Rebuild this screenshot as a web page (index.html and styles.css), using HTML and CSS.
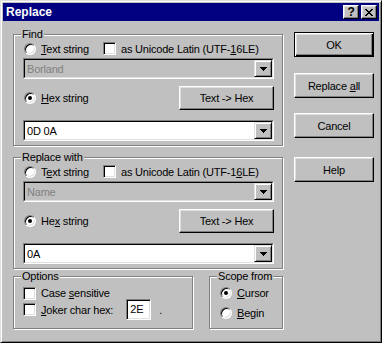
FILE: index.html
```html
<!DOCTYPE html>
<html lang="en">
<head>
  <meta charset="UTF-8" />
  <title>Replace</title>
  <link rel="stylesheet" href="styles.css">
</head>
<body>
  <div class="window">
    <div class="titlebar">
      <span class="title">Replace</span>
      <div class="caption-btns">
        <span class="cap-btn help">?</span>
        <span class="cap-btn close">
          <svg width="8" height="7" viewBox="0 0 8 7" shape-rendering="crispEdges">
            <path d="M0 0h2v1H0zM6 0h2v1H6zM1 1h2v1H1zM5 1h2v1H5zM2 2h4v1H2zM3 3h2v1H3zM2 4h4v1H2zM1 5h2v1H1zM5 5h2v1H5zM0 6h2v1H0zM6 6h2v1H6z" fill="#000"/>
          </svg>
        </span>
      </div>
    </div>

    <div class="client">
      <div class="left-col">
        <!-- Find -->
        <fieldset class="group main-group">
          <legend>Find</legend>
          <div class="opt-row">
            <label class="radio-label"><span class="radio"></span><span><u>T</u>ext string</span></label>
            <label class="check-label"><span class="check"></span><span>as Unicode Latin (UTF-<u>1</u>6LE)</span></label>
          </div>
          <div class="combo disabled first-combo">
            <div class="combo-inner">
              <span class="combo-text">Borland</span>
              <span class="combo-btn"><svg width="7" height="4" viewBox="0 0 7 4" shape-rendering="crispEdges"><path d="M0 0h7v1H0zM1 1h5v1H1zM2 2h3v1H2zM3 3h1v1H3z" fill="#000"/></svg></span>
            </div>
          </div>
          <div class="hex-row">
            <label class="radio-label"><span class="radio checked"></span><span><u>H</u>ex string</span></label>
            <button class="btn text-hex">Text -&gt; Hex</button>
          </div>
          <div class="combo last-combo">
            <div class="combo-inner">
              <span class="combo-text">0D 0A</span>
              <span class="combo-btn"><svg width="7" height="4" viewBox="0 0 7 4" shape-rendering="crispEdges"><path d="M0 0h7v1H0zM1 1h5v1H1zM2 2h3v1H2zM3 3h1v1H3z" fill="#000"/></svg></span>
            </div>
          </div>
        </fieldset>

        <!-- Replace with -->
        <fieldset class="group main-group replace-group">
          <legend>Replace with</legend>
          <div class="opt-row">
            <label class="radio-label"><span class="radio"></span><span>T<u>e</u>xt string</span></label>
            <label class="check-label"><span class="check"></span><span>as Unicode Latin (UTF-1<u>6</u>LE)</span></label>
          </div>
          <div class="combo disabled first-combo">
            <div class="combo-inner">
              <span class="combo-text">Name</span>
              <span class="combo-btn"><svg width="7" height="4" viewBox="0 0 7 4" shape-rendering="crispEdges"><path d="M0 0h7v1H0zM1 1h5v1H1zM2 2h3v1H2zM3 3h1v1H3z" fill="#000"/></svg></span>
            </div>
          </div>
          <div class="hex-row">
            <label class="radio-label"><span class="radio checked"></span><span>He<u>x</u> string</span></label>
            <button class="btn text-hex">Text -&gt; Hex</button>
          </div>
          <div class="combo last-combo">
            <div class="combo-inner">
              <span class="combo-text">0A</span>
              <span class="combo-btn"><svg width="7" height="4" viewBox="0 0 7 4" shape-rendering="crispEdges"><path d="M0 0h7v1H0zM1 1h5v1H1zM2 2h3v1H2zM3 3h1v1H3z" fill="#000"/></svg></span>
            </div>
          </div>
        </fieldset>

        <div class="bottom-row">
          <fieldset class="group options">
            <legend>Options</legend>
            <label class="check-label case-row"><span class="check"></span><span>Case <u>s</u>ensitive</span></label>
            <div class="joker-row">
              <label class="check-label"><span class="check"></span><span><u>J</u>oker char hex:</span></label>
              <span class="textbox">2E</span>
              <span class="dot">.</span>
            </div>
          </fieldset>
          <fieldset class="group scope">
            <legend>Scope from</legend>
            <label class="radio-label scope-row"><span class="radio checked"></span><span><u>C</u>ursor</span></label>
            <label class="radio-label scope-row"><span class="radio"></span><span><u>B</u>egin</span></label>
          </fieldset>
        </div>
      </div>

      <div class="button-col">
        <button class="btn side-btn default">OK</button>
        <button class="btn side-btn replace-all">Replace <u>a</u>ll</button>
        <button class="btn side-btn cancel">Cancel</button>
        <button class="btn side-btn help-btn">Help</button>
      </div>
    </div>
  </div>
</body>
</html>
```

FILE: styles.css
```css
:root {
  --face: #c0c0c0;
  --light: #dfdfdf;
  --shadow: #808080;
  --dark: #000000;
  --white: #ffffff;
  --title-blue: #000080;
}

body {
  margin: 0;
  font-family: 'Liberation Sans', Arial, sans-serif;
  font-size: 11px;
  letter-spacing: -0.2px;
  color: #000;
  background: var(--face);
}

.window {
  width: 382px;
  height: 343px;
  box-sizing: border-box;
  background: var(--face);
  border: 1px solid;
  border-color: var(--light) var(--dark) var(--dark) var(--light);
  box-shadow: inset 1px 1px var(--white), inset -1px -1px var(--shadow);
  padding: 2px;
  display: flex;
  flex-direction: column;
}

.titlebar {
  height: 18px;
  flex: none;
  background: var(--title-blue);
  color: #fff;
  display: flex;
  align-items: center;
  justify-content: space-between;
  padding: 0 2px 0 3px;
}

.title {
  font-weight: bold;
  font-size: 12px;
  letter-spacing: 0;
}

.caption-btns {
  display: flex;
  gap: 2px;
}

.cap-btn {
  width: 16px;
  height: 14px;
  box-sizing: border-box;
  background: var(--face);
  border: 1px solid;
  border-color: var(--white) var(--dark) var(--dark) var(--white);
  box-shadow: inset -1px -1px var(--shadow), inset 1px 1px var(--light);
  display: flex;
  align-items: center;
  justify-content: center;
  color: #000;
}

.cap-btn.help {
  font-weight: bold;
  font-size: 12px;
  line-height: 12px;
}

.client {
  flex: 1;
  display: flex;
  gap: 11px;
  padding: 7px 5px 0 10px;
}

.left-col {
  width: 270px;
  display: flex;
  flex-direction: column;
}

/* etched group boxes */
.group {
  margin: 0;
  min-width: 0;
  box-sizing: border-box;
  border: 1px solid var(--shadow);
  box-shadow: 1px 1px 0 var(--white), inset 1px 1px 0 var(--white);
  padding: 1px 8px 4px 9px;
}

.group legend {
  padding: 0 1px;
  margin-left: -2px;
  line-height: 13px;
  white-space: nowrap;
  background: var(--face);
}

.replace-group {
  margin-top: 5px;
}

.opt-row {
  display: flex;
  align-items: center;
  height: 13px;
}

.radio-label,
.check-label {
  display: flex;
  align-items: center;
  white-space: nowrap;
}

.opt-row .radio-label {
  width: 80px;
}

.radio {
  width: 12px;
  height: 12px;
  box-sizing: border-box;
  border-radius: 50%;
  border: 1px solid;
  border-color: var(--shadow) var(--white) var(--white) var(--shadow);
  box-shadow: inset 1px 1px var(--dark), inset -1px -1px var(--light);
  background: var(--white);
  margin: 0 5px 0 1px;
  position: relative;
  flex: none;
}

.radio.checked::after {
  content: '';
  position: absolute;
  left: 3px;
  top: 3px;
  width: 4px;
  height: 4px;
  border-radius: 50%;
  background: #000;
}

.check {
  width: 13px;
  height: 13px;
  box-sizing: border-box;
  border: 1px solid;
  border-color: var(--shadow) var(--white) var(--white) var(--shadow);
  box-shadow: inset 1px 1px var(--dark), inset -1px -1px var(--light);
  background: var(--white);
  margin-right: 5px;
  flex: none;
}

/* combo boxes */
.combo {
  height: 21px;
  box-sizing: border-box;
  border: 1px solid;
  border-color: var(--shadow) var(--white) var(--white) var(--shadow);
}

.combo-inner {
  height: 100%;
  box-sizing: border-box;
  border: 1px solid;
  border-color: var(--dark) var(--light) var(--light) var(--dark);
  background: var(--white);
  display: flex;
  align-items: center;
}

.combo.disabled .combo-inner {
  background: var(--face);
  color: var(--shadow);
}

.combo-text {
  flex: 1;
  padding-left: 2px;
}

.combo-btn {
  width: 18px;
  height: 17px;
  box-sizing: border-box;
  background: var(--face);
  border: 1px solid;
  border-color: var(--light) var(--dark) var(--dark) var(--light);
  box-shadow: inset 1px 1px var(--white), inset -1px -1px var(--shadow);
  display: flex;
  align-items: center;
  justify-content: center;
}

.first-combo {
  margin-top: 3px;
}

.hex-row {
  display: flex;
  align-items: center;
  justify-content: space-between;
  height: 24px;
  margin-top: 7px;
}

.last-combo {
  margin-top: 10px;
}

/* push buttons */
.btn {
  box-sizing: border-box;
  height: 24px;
  padding: 0;
  font: inherit;
  letter-spacing: inherit;
  color: #000;
  background: var(--face);
  border: 1px solid;
  border-color: var(--white) var(--dark) var(--dark) var(--white);
  box-shadow: inset -1px -1px var(--shadow), inset 1px 1px var(--light);
}

.text-hex {
  width: 95px;
}

.button-col {
  width: 80px;
  display: flex;
  flex-direction: column;
}

.side-btn {
  width: 80px;
  height: 25px;
}

.side-btn.default {
  margin-top: 4px;
  border-color: var(--dark);
  box-shadow: inset 1px 1px var(--white), inset -1px -1px var(--dark), inset -2px -2px var(--shadow), inset 2px 2px var(--light);
}

.replace-all {
  margin-top: 16px;
}

.cancel {
  margin-top: 15px;
}

.help-btn {
  margin-top: 19px;
}

/* bottom groups */
.bottom-row {
  display: flex;
  gap: 16px;
  margin-top: 1px;
}

.options {
  width: 180px;
  height: 59px;
  padding-top: 4px;
}

.scope {
  width: 74px;
  height: 59px;
  padding-top: 4px;
}

.case-row {
  height: 12px;
}

.joker-row {
  display: flex;
  align-items: center;
  height: 21px;
}

.textbox {
  width: 25px;
  height: 21px;
  box-sizing: border-box;
  margin-left: 13px;
  border: 1px solid;
  border-color: var(--shadow) var(--white) var(--white) var(--shadow);
  box-shadow: inset 1px 1px var(--dark), inset -1px -1px var(--light);
  background: var(--white);
  padding: 0 3px;
  line-height: 19px;
}

.dot {
  margin-left: 8px;
}

.scope-row {
  height: 12px;
  margin-bottom: 8px;
}
```
